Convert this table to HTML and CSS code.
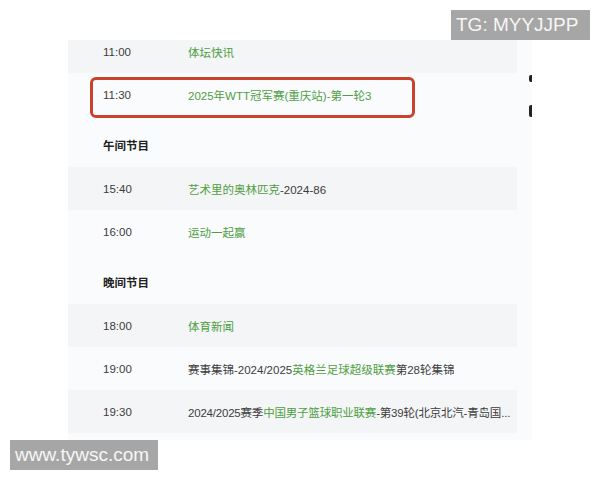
FILE: index.html
```html
<!DOCTYPE html>
<html lang="zh-CN">
<head>
  <meta charset="UTF-8">
  <title>节目单</title>
  <link rel="stylesheet" href="styles.css">
</head>
<body>
  <div class="page">
    <div class="panel">
      <div class="list">
        <div class="row striped">
          <span class="time">11:00</span>
          <span class="title green">体坛快讯</span>
        </div>
        <div class="row marked">
          <span class="time">11:30</span>
          <span class="title green">2025年WTT冠军赛(重庆站)-第一轮3</span>
          <div class="mark"></div>
        </div>

        <div class="heading">午间节目</div>
        <div class="row striped">
          <span class="time">15:40</span>
          <span class="title"><span class="green">艺术里的奥林匹克</span>-2024-86</span>
        </div>
        <div class="row">
          <span class="time">16:00</span>
          <span class="title green">运动一起赢</span>
        </div>

        <div class="heading">晚间节目</div>
        <div class="row striped">
          <span class="time">18:00</span>
          <span class="title green">体育新闻</span>
        </div>
        <div class="row">
          <span class="time">19:00</span>
          <span class="title">赛事集锦-2024/2025<span class="green">英格兰足球超级联赛</span>第28轮集锦</span>
        </div>
        <div class="row striped">
          <span class="time">19:30</span>
          <span class="title tight">2024/2025赛季<span class="green">中国男子篮球职业联赛</span>-第39轮(北京北汽-青岛国...</span>
        </div>
      </div>
      <div class="edge">
        <span class="edge-a"></span>
        <span class="edge-b"></span>
      </div>
    </div>

    <div class="badge badge-top">TG: MYYJJPP</div>
    <div class="badge badge-bottom">www.tywsc.com</div>
  </div>
</body>
</html>
```

FILE: styles.css
```css
* {
  box-sizing: border-box;
}

body {
  margin: 0;
  background: #fff;
  font-family: 'Liberation Sans', 'Noto Sans CJK SC', sans-serif;
  color: #333;
}

.page {
  position: relative;
  width: 600px;
  height: 480px;
  padding: 40px 0 0 68px;
}

.panel {
  position: relative;
  width: 464px;
  height: 400px;
  background: #fafbfd;
  overflow: hidden;
}

.list {
  width: 449px;
  margin-top: -10px;
}

.row {
  position: relative;
  display: flex;
  align-items: center;
  height: 43px;
  padding: 0 2px 0 35px;
  font-size: 11.5px;
}

.row.striped {
  background: #f4f5f7;
}

.time {
  flex: 0 0 85px;
  color: #3c3c3c;
}

.title {
  flex: 1;
  min-width: 0;
  white-space: nowrap;
  color: #3c3c3c;
}

.title.tight {
  letter-spacing: -0.2px;
}

.green {
  color: #4f9e42;
}

.heading {
  height: 51px;
  padding: 21px 0 0 35px;
  font-size: 11.5px;
  font-weight: bold;
  color: #222;
}

.mark {
  position: absolute;
  left: 22px;
  top: 4px;
  width: 325px;
  height: 41px;
  border: 3px solid #c9432c;
  border-radius: 6px;
}

/* cut-off glyphs peeking in at the right edge */
.edge {
  position: absolute;
  right: 0;
  top: 35px;
  width: 3px;
}

.edge span {
  display: block;
  width: 3px;
  background: #222;
  border-radius: 2px 0 0 2px;
}

.edge-a {
  height: 7px;
}

.edge-b {
  height: 12px;
  margin-top: 23px;
}

.badge {
  position: absolute;
  background: #a6a6a6;
  color: #f6f6f6;
  font-size: 19px;
  line-height: 30px;
  height: 30px;
  padding: 0 5px;
}

.badge-top {
  left: 451px;
  top: 10px;
  width: 139px;
}

.badge-bottom {
  left: 10px;
  top: 440px;
  width: 148px;
}
```
